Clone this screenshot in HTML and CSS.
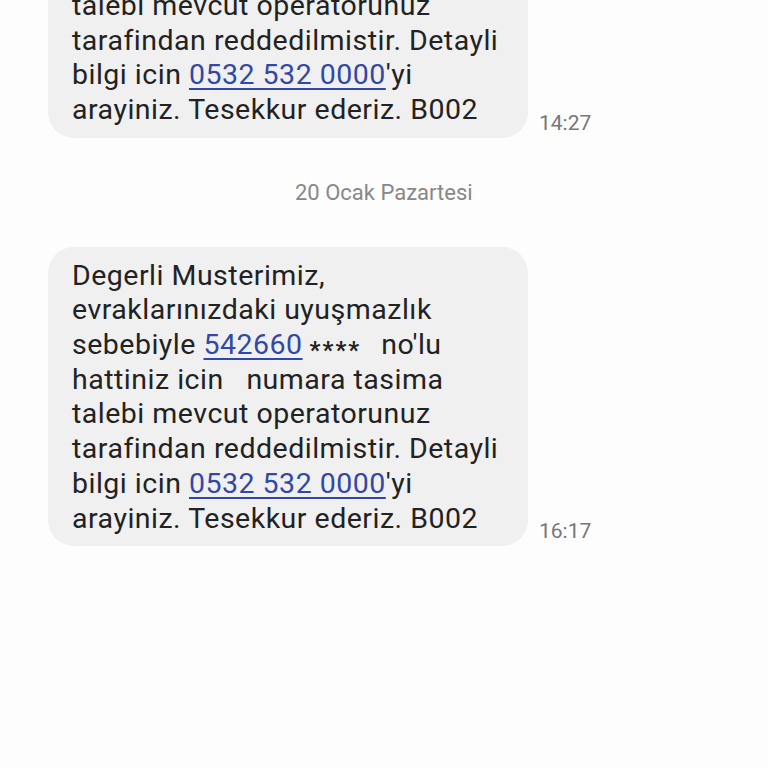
FILE: index.html
```html
<!DOCTYPE html>
<html lang="tr">
<head>
<meta charset="utf-8">
<link rel="stylesheet" href="styles.css">
</head>
<body>
<div class="thread">
  <div class="row">
    <div class="bubble">Degerli Musterimiz,<br>evraklarınızdaki uyuşmazlık<br>sebebiyle <a class="lnk">542660</a><span class="ast">****</span>  no'lu<br>hattiniz icin   numara tasima<br>talebi mevcut operatorunuz<br>tarafindan reddedilmistir. Detayli<br>bilgi icin <a class="lnk">0532 532 0000</a>'yi<br>arayiniz. Tesekkur ederiz. B002</div>
    <div class="time">14:27</div>
  </div>
  <div class="date">20 Ocak Pazartesi</div>
  <div class="row">
    <div class="bubble">Degerli Musterimiz,<br>evraklarınızdaki uyuşmazlık<br>sebebiyle <a class="lnk">542660</a><span class="ast">****</span>  no'lu<br>hattiniz icin   numara tasima<br>talebi mevcut operatorunuz<br>tarafindan reddedilmistir. Detayli<br>bilgi icin <a class="lnk">0532 532 0000</a>'yi<br>arayiniz. Tesekkur ederiz. B002</div>
    <div class="time">16:17</div>
  </div>
</div>
</body>
</html>
```
FILE: styles.css
```css
html, body {
  margin: 0;
  padding: 0;
  background: #fdfdfd;
  height: 768px;
  overflow: hidden;
}
body {
  font-family: Roboto, "Noto Sans", sans-serif;
  color: #222222;
}
.thread {
  margin-top: -162px;
  padding-left: 48px;
  display: flex;
  flex-direction: column;
}
.row {
  display: flex;
  align-items: flex-end;
  gap: 11px;
}
.bubble {
  width: 480px;
  box-sizing: border-box;
  background: #f0f0f0;
  border-radius: 26px;
  padding: 12px 14px 10px 24px;
  font-size: 28.5px;
  line-height: 34.7px;
  white-space: pre-wrap;
  letter-spacing: 0.5px;
}
.lnk {
  color: #3148a8;
  text-decoration: underline;
  text-decoration-thickness: 1.5px;
  text-underline-offset: 4px;
}
.ast {
  font-size: 24px;
  line-height: 16px;
  font-weight: 700;
  letter-spacing: 2px;
  padding-left: 7px;
  padding-right: 5px;
  vertical-align: -0.15em;
}
.time {
  font-size: 21px;
  color: #777777;
  margin-bottom: 1px;
  line-height: 28px;
}
.date {
  margin: 41px 0 40px;
  padding-left: 247px;
  font-size: 22px;
  color: #888888;
  line-height: 28px;
}
```
